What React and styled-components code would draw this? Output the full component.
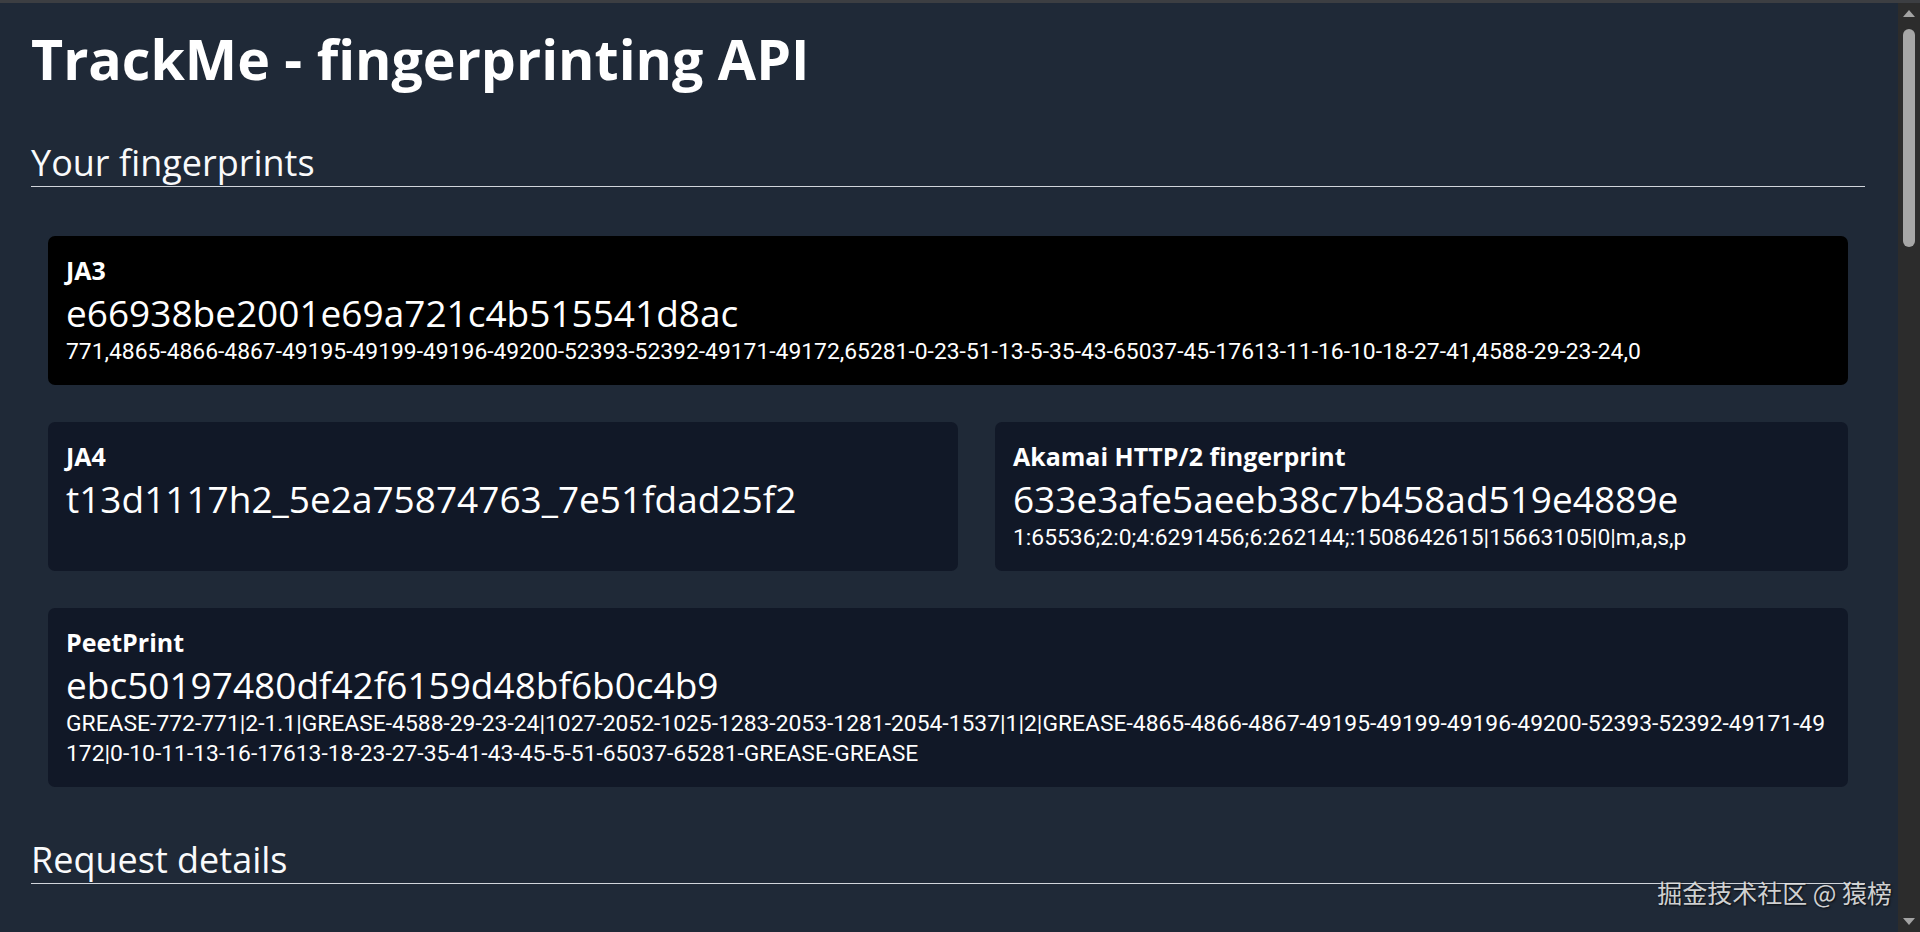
import React from 'react';
import styled, { createGlobalStyle } from 'styled-components';

const GlobalStyle = createGlobalStyle`
  html, body {
    margin: 0;
    padding: 0;
    height: 100%;
    overflow: hidden;
    background: #1f2937;
  }
  body {
    font-family: "Open Sans", "Noto Sans", sans-serif;
    color: #ffffff;
  }
  #root {
    height: 100%;
  }
`;

const Frame = styled.div`
  position: relative;
  height: 100vh;
  box-sizing: border-box;
  border-top: 3px solid #3c3e42;
  display: flex;
  flex-direction: row;
`;

const Main = styled.main`
  flex: 1;
  min-width: 0;
  overflow: hidden;
  padding: 0 33px 0 31px;
  background: #1f2937;
`;

const Title = styled.h1`
  margin: 28px 0 0;
  font-size: 55.5px;
  line-height: 56px;
  font-weight: 700;
  color: #ffffff;
`;

const SectionTitle = styled.h2`
  margin: ${p => p.$top}px 0 0;
  padding-bottom: 1px;
  font-size: 36px;
  line-height: 45px;
  font-weight: 400;
  color: #f9fafb;
  border-bottom: 1px solid #d1d5db;
`;

const Cards = styled.div`
  display: flex;
  flex-wrap: wrap;
  gap: 37px;
  margin-top: 49px;
  padding: 0 17px;
`;

const Card = styled.div`
  flex: 1 1 auto;
  min-width: 0;
  box-sizing: border-box;
  padding: 17px 18px 18px;
  border-radius: 7px;
  background: ${p => (p.$black ? '#000000' : '#111827')};
`;

const Label = styled.div`
  font-size: 25px;
  line-height: 35px;
  font-weight: 700;
`;

const Hash = styled.div`
  font-size: 37px;
  line-height: 49px;
  font-weight: 400;
`;

// Roboto keeps "|", ":" and ";" narrow, like the original face.
const Raw = styled.div`
  font-family: Roboto, "Open Sans", sans-serif;
  font-size: 22.85px;
  line-height: 30px;
  word-break: break-all;
`;

const ScrollTrack = styled.div`
  width: 22px;
  flex: none;
  background: #2c2c2c;
  display: flex;
  flex-direction: column;
  align-items: center;
  padding: 7px 0 6px;
  box-sizing: border-box;
`;

const Thumb = styled.div`
  width: 12px;
  height: 218px;
  margin-top: 11px;
  border-radius: 6px;
  background: #a6a6a6;
`;

const Spacer = styled.div`
  flex: 1;
`;

const Watermark = styled.div`
  position: absolute;
  right: 28px;
  bottom: 25px;
  font-family: "Noto Sans CJK SC", sans-serif;
  font-size: 25px;
  line-height: 30px;
  color: rgba(235, 235, 235, 0.88);
  text-shadow: 1px 1px 2px rgba(0, 0, 0, 0.7);
  pointer-events: none;
`;

const Arrow = ({ down }) => (
  <svg width="12" height="8" viewBox="0 0 12 8">
    <polygon points={down ? '0,0 12,0 6,7' : '0,7 12,7 6,0'} fill="#a3a3a3" />
  </svg>
);

const prints = [
  {
    label: 'JA3',
    hash: 'e66938be2001e69a721c4b515541d8ac',
    raw: '771,4865-4866-4867-49195-49199-49196-49200-52393-52392-49171-49172,65281-0-23-51-13-5-35-43-65037-45-17613-11-16-10-18-27-41,4588-29-23-24,0',
    black: true,
  },
  {
    label: 'JA4',
    hash: 't13d1117h2_5e2a75874763_7e51fdad25f2',
  },
  {
    label: 'Akamai HTTP/2 fingerprint',
    hash: '633e3afe5aeeb38c7b458ad519e4889e',
    raw: '1:65536;2:0;4:6291456;6:262144;:1508642615|15663105|0|m,a,s,p',
  },
  {
    label: 'PeetPrint',
    hash: 'ebc50197480df42f6159d48bf6b0c4b9',
    raw: 'GREASE-772-771|2-1.1|GREASE-4588-29-23-24|1027-2052-1025-1283-2053-1281-2054-1537|1|2|GREASE-4865-4866-4867-49195-49199-49196-49200-52393-52392-49171-49172|0-10-11-13-16-17613-18-23-27-35-41-43-45-5-51-65037-65281-GREASE-GREASE',
  },
];

export default function App() {
  return (
    <Frame>
      <GlobalStyle />
      <Main>
        <Title>TrackMe - fingerprinting API</Title>
        <SectionTitle $top={53}>Your fingerprints</SectionTitle>
        <Cards>
          {prints.map(p => (
            <Card key={p.label} $black={p.black}>
              <Label>{p.label}</Label>
              <Hash>{p.hash}</Hash>
              {p.raw && <Raw>{p.raw}</Raw>}
            </Card>
          ))}
        </Cards>
        <SectionTitle $top={50}>Request details</SectionTitle>
      </Main>
      <ScrollTrack>
        <Arrow />
        <Thumb />
        <Spacer />
        <Arrow down />
      </ScrollTrack>
      <Watermark>掘金技术社区 @ 猿榜</Watermark>
    </Frame>
  );
}
